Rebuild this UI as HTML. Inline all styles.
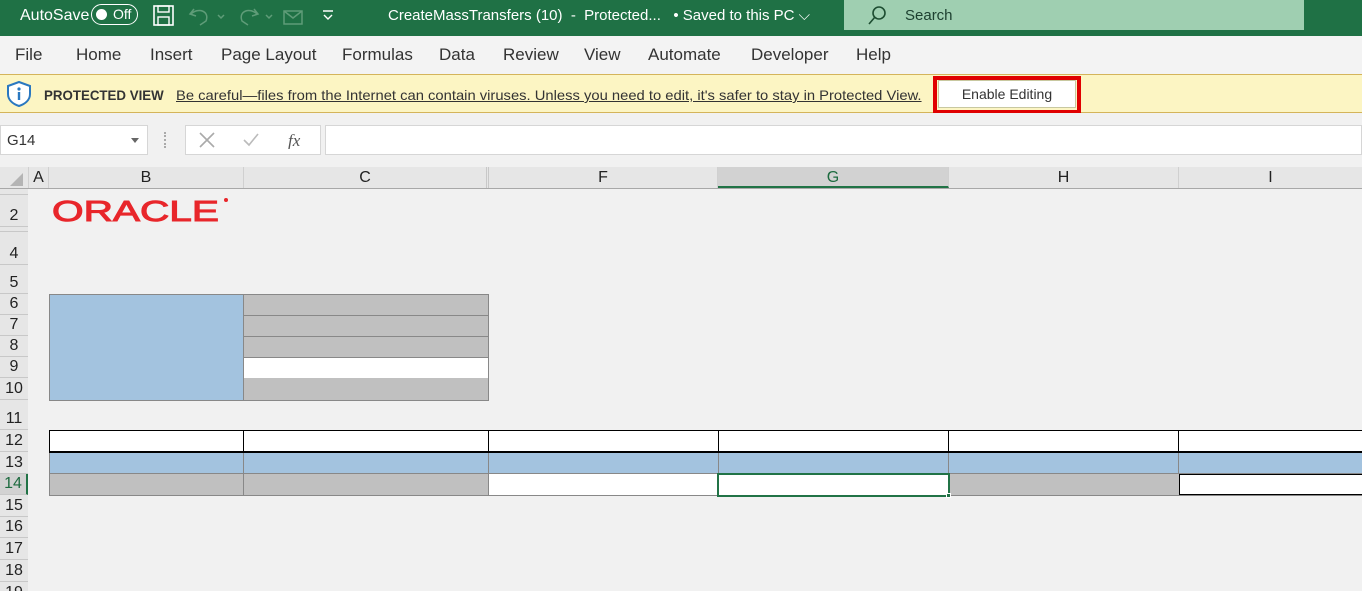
<!DOCTYPE html>
<html><head><meta charset="utf-8"><style>
*{box-sizing:border-box;margin:0;padding:0}
html,body{width:1362px;height:591px;overflow:hidden}
body{background:#f1f1f1;font-family:"Liberation Sans",sans-serif;position:relative}
.a{position:absolute}
.t{color:#fff;font-size:15px}
.tab{position:absolute;top:45px;font-size:17px;color:#333}
.ch{position:absolute;top:167px;height:21px;font-size:16px;text-align:center;line-height:22px;color:#222;border-right:1px solid #d0d0d0}
.rh{position:absolute;left:0;width:28px;text-align:center;font-size:16px;color:#222;border-bottom:1px solid #c8c8c8;background:#e6e6e6;display:flex;align-items:flex-end;justify-content:center;padding-bottom:1px}
.c{position:absolute}
</style></head><body>
<!-- title bar -->
<div class="a" style="left:0;top:0;width:1362px;height:36px;background:#1f7145"></div>
<div class="a t" style="left:20px;top:7px;font-size:16px">AutoSave</div>
<div class="a" style="left:91px;top:4px;width:47px;height:21px;border:1.5px solid #fff;border-radius:11px"></div>
<div class="a" style="left:96px;top:9px;width:11px;height:11px;background:#fff;border-radius:50%"></div>
<div class="a t" style="left:113px;top:6px;font-size:14px">Off</div>
<svg class="a" style="left:153px;top:5px" width="22" height="22"><rect x="1" y="1" width="19" height="19" fill="none" stroke="#fff" stroke-width="1.6"/><rect x="5" y="1" width="11" height="6" fill="none" stroke="#fff" stroke-width="1.4"/><rect x="5" y="12" width="11" height="8" fill="none" stroke="#fff" stroke-width="1.4"/></svg>
<svg class="a" style="left:188px;top:5px" width="120" height="22" stroke="#5f9c78" fill="none" stroke-width="1.5"><path d="M6 4 L2 9 L8 11 M3 9 C10 2 22 6 18 16 L12 20"/><path d="M30 10l3 3 3-3"/><path d="M66 4 L70 9 L64 11 M69 9 C62 2 50 6 54 16 L60 20"/><path d="M78 10l3 3 3-3"/><rect x="96" y="6" width="18" height="13"/><path d="M96 6l9 7 9-7"/></svg>
<svg class="a" style="left:322px;top:10px" width="12" height="10" stroke="#fff" fill="none" stroke-width="1.4"><path d="M1 1h10M2 5l4 4 4-4"/></svg>
<div class="a t" style="left:388px;top:7px;white-space:nowrap">CreateMassTransfers (10)&nbsp; -&nbsp; Protected...&nbsp;&nbsp; • Saved to this PC ⌵</div>
<div class="a" style="left:844px;top:0;width:460px;height:30px;background:#9fcfb1"></div>
<svg class="a" style="left:866px;top:4px" width="22" height="22" stroke="#1d4d31" fill="none" stroke-width="1.6"><circle cx="13" cy="9" r="6"/><path d="M9 13l-6 7"/></svg>
<div class="a" style="left:905px;top:7px;font-size:15px;color:#1d4030">Search</div>
<!-- ribbon tabs -->
<div class="a" style="left:0;top:36px;width:1362px;height:39px;background:#f3f3f3"></div>
<div class="tab" style="left:15px">File</div>
<div class="tab" style="left:76px">Home</div>
<div class="tab" style="left:150px">Insert</div>
<div class="tab" style="left:221px">Page Layout</div>
<div class="tab" style="left:342px">Formulas</div>
<div class="tab" style="left:439px">Data</div>
<div class="tab" style="left:503px">Review</div>
<div class="tab" style="left:584px">View</div>
<div class="tab" style="left:648px">Automate</div>
<div class="tab" style="left:751px">Developer</div>
<div class="tab" style="left:856px">Help</div>
<!-- protected bar -->
<div class="a" style="left:0;top:74px;width:1362px;height:39px;background:#fcf5c3;border-top:1.5px solid #d4b45a;border-bottom:1.5px solid #d4b45a"></div>
<svg class="a" style="left:6px;top:80px" width="26" height="28"><path d="M13 2 L24 6 V14 C24 20 19 24 13 26 C7 24 2 20 2 14 V6 Z" fill="#fff" stroke="#2a78c0" stroke-width="2"/><circle cx="13" cy="9" r="1.6" fill="#2a78c0"/><rect x="11.8" y="12" width="2.4" height="8" fill="#2a78c0"/></svg>
<div class="a" style="left:44px;top:87px;font-size:14px;color:#333;font-weight:bold;transform:scaleX(0.95);transform-origin:left">PROTECTED VIEW</div>
<div class="a" style="left:176px;top:87px;font-size:14px;color:#333;text-decoration:underline;white-space:nowrap;transform:scaleX(1.055);transform-origin:left">Be careful—files from the Internet can contain viruses. Unless you need to edit, it's safer to stay in Protected View.</div>
<div class="a" style="left:933px;top:76px;width:148px;height:38px;border:4px solid #e00000"></div>
<div class="a" style="left:938px;top:80px;width:138px;height:28px;background:#fff;border:1px solid #c8c8a0;font-size:14px;color:#333;text-align:center;line-height:27px">Enable Editing</div>
<!-- formula bar -->
<div class="a" style="left:0;top:113px;width:1362px;height:54px;background:#f1f1f1"></div>
<div class="a" style="left:0;top:125px;width:148px;height:30px;background:#fff;border:1px solid #d6d6d6"></div>
<div class="a" style="left:7px;top:132px;font-size:15px;color:#333">G14</div>
<div class="a" style="left:131px;top:138px;border:4px solid transparent;border-top:5px solid #666"></div>
<div class="a" style="left:164px;top:132px;width:3px;height:16px;border-left:2px dotted #aaa"></div>
<div class="a" style="left:185px;top:125px;width:136px;height:30px;background:#fff;border:1px solid #d6d6d6"></div>
<svg class="a" style="left:198px;top:131px" width="120" height="18" fill="none" stroke-width="1.6"><path d="M2 2l14 14M16 2L2 16" stroke="#aaa"/><path d="M46 9l5 5 9-11" stroke="#bbb"/><text x="90" y="15" font-family="Liberation Serif" font-style="italic" font-size="17" fill="#555" stroke="none">fx</text></svg>
<div class="a" style="left:325px;top:125px;width:1037px;height:30px;background:#fff;border:1px solid #d6d6d6"></div>
<!-- column headers -->
<div class="a" style="left:0;top:167px;width:1362px;height:22px;background:#e6e6e6;border-bottom:1px solid #a8a8a8"></div>
<div class="a" style="left:10px;top:173px;width:0;height:0;border-left:13px solid transparent;border-bottom:13px solid #b4b4b4"></div>
<div class="ch" style="left:28px;width:21px;border-left:1px solid #d0d0d0">A</div>
<div class="ch" style="left:49px;width:195px">B</div>
<div class="ch" style="left:244px;width:245px;border-right:3px double #c8c8c8">C</div>
<div class="ch" style="left:489px;width:229px">F</div>
<div class="ch" style="left:718px;width:231px;background:#d2d2d2;color:#1d6b3f;border-bottom:2px solid #217346">G</div>
<div class="ch" style="left:949px;width:230px">H</div>
<div class="ch" style="left:1179px;width:183px;border-right:none">I</div>
<!-- row headers -->
<div class="a" style="left:0;top:189px;width:28px;height:402px;background:#e6e6e6;border-right:1px solid #bdbdbd"></div>
<div class="rh" style="top:189px;height:6px;font-size:0"></div>
<div class="rh" style="top:195px;height:32px">2</div>
<div class="rh" style="top:227px;height:5px;font-size:0"></div>
<div class="rh" style="top:232px;height:33px">4</div>
<div class="rh" style="top:265px;height:29px">5</div>
<div class="rh" style="top:294px;height:21px">6</div>
<div class="rh" style="top:315px;height:21px">7</div>
<div class="rh" style="top:336px;height:21px">8</div>
<div class="rh" style="top:357px;height:21px">9</div>
<div class="rh" style="top:378px;height:22px">10</div>
<div class="rh" style="top:400px;height:30px">11</div>
<div class="rh" style="top:430px;height:22px">12</div>
<div class="rh" style="top:452px;height:22px">13</div>
<div class="rh" style="top:474px;height:21px;background:#d2d2d2;color:#1d6b3f;border-right:2px solid #217346">14</div>
<div class="rh" style="top:495px;height:22px">15</div>
<div class="rh" style="top:517px;height:21px">16</div>
<div class="rh" style="top:538px;height:22px">17</div>
<div class="rh" style="top:560px;height:22px">18</div>
<div class="rh" style="top:582px;height:22px">19</div>
<!-- Oracle logo -->
<div class="a" style="left:52px;top:196px;font-size:29px;line-height:32px;color:#e8262b;-webkit-text-stroke:1px #e8262b;transform:scaleX(1.4);transform-origin:left;font-family:'Liberation Sans',sans-serif">ORACLE</div>
<div class="a" style="left:224px;top:198px;width:4px;height:4px;border-radius:50%;background:#e8262b"></div>
<!-- block rows 6-10 -->
<div class="c" style="left:49px;top:294px;width:195px;height:107px;background:#a3c3df;border:1px solid #888;border-right:none"></div>
<div class="c" style="left:243px;top:294px;width:246px;height:22px;background:#c0c0c0;border:1px solid #888"></div>
<div class="c" style="left:243px;top:315px;width:246px;height:22px;background:#c0c0c0;border:1px solid #888"></div>
<div class="c" style="left:243px;top:336px;width:246px;height:22px;background:#c0c0c0;border:1px solid #888"></div>
<div class="c" style="left:243px;top:357px;width:246px;height:22px;background:#fff;border:1px solid #888"></div>
<div class="c" style="left:243px;top:378px;width:246px;height:23px;background:#c0c0c0;border:1px solid #888;border-top:none"></div>
<!-- row 12 -->
<div class="c" style="left:49px;top:430px;width:1313px;height:23px;background:#fff;border:1px solid #000;border-right:none;border-bottom:2px solid #000"></div>
<!-- row 13 -->
<div class="c" style="left:49px;top:453px;width:1313px;height:21px;background:#a3c3df;border-left:1px solid #888;border-bottom:1px solid #888"></div>
<!-- row 14 -->
<div class="c" style="left:49px;top:474px;width:1313px;height:22px;background:#c0c0c0;border-left:1px solid #888;border-bottom:1.5px solid #888"></div>
<div class="c" style="left:489px;top:474px;width:229px;height:21px;background:#fff"></div>
<div class="c" style="left:1179px;top:474px;width:183px;height:21px;background:#fff;border:1px solid #000;border-right:none"></div>
<!-- vertical lines rows 12-14 -->
<div class="c" style="left:243px;top:430px;width:1px;height:23px;background:#000"></div>
<div class="c" style="left:488px;top:430px;width:1px;height:23px;background:#000"></div>
<div class="c" style="left:718px;top:430px;width:1px;height:23px;background:#000"></div>
<div class="c" style="left:948px;top:430px;width:1px;height:23px;background:#000"></div>
<div class="c" style="left:1178px;top:430px;width:1px;height:23px;background:#000"></div>
<div class="c" style="left:243px;top:453px;width:1px;height:43px;background:#888"></div>
<div class="c" style="left:488px;top:453px;width:1px;height:43px;background:#888"></div>
<div class="c" style="left:718px;top:453px;width:1px;height:21px;background:#888"></div>
<div class="c" style="left:948px;top:453px;width:1px;height:21px;background:#888"></div>
<div class="c" style="left:1178px;top:453px;width:1px;height:21px;background:#888"></div>
<!-- selection -->
<div class="c" style="left:717px;top:473px;width:233px;height:24px;background:#fff;border:2px solid #217346"></div>
<div class="c" style="left:946px;top:493px;width:5px;height:5px;background:#217346;border:1px solid #fff"></div>
</body></html>
